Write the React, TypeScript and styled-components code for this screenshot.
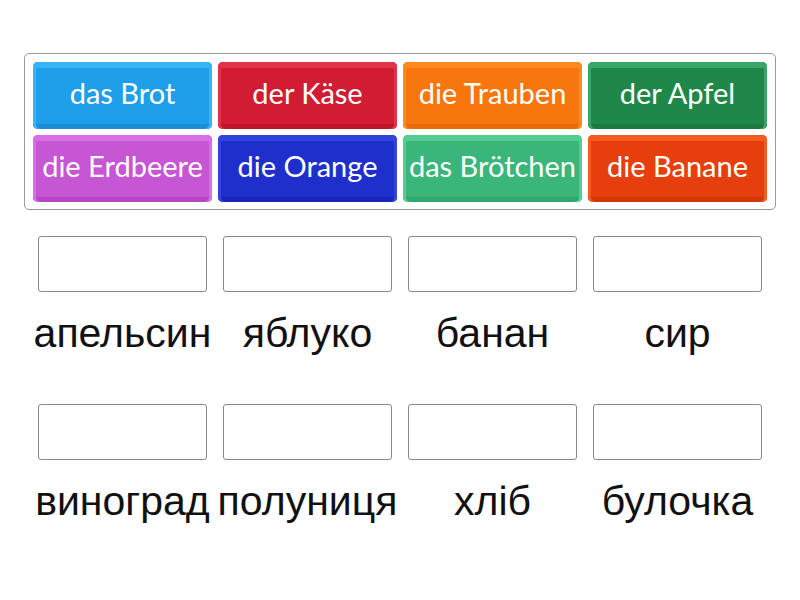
import React from "react";
import styled, { createGlobalStyle } from "styled-components";

const Global = createGlobalStyle`
  html, body { margin: 0; padding: 0; background: #fff; }
  body { width: 800px; height: 600px; overflow: hidden; }
`;

const Page = styled.div`
  width: 800px;
  height: 600px;
  box-sizing: border-box;
  padding: 53px 24px 0 24px;
`;

const Bank = styled.div`
  box-sizing: border-box;
  width: 752px;
  height: 157px;
  border: 1px solid #9a9a9a;
  border-radius: 5px;
  padding: 8px 8px 0 8px;
  display: grid;
  grid-template-columns: repeat(4, 179px);
  grid-auto-rows: 67px;
  column-gap: 6px;
  row-gap: 6px;
`;

const Tile = styled.div<{ $face: string; $light: string; $dark: string }>`
  box-sizing: border-box;
  border-radius: 5px;
  background: ${(p) => p.$face};
  box-shadow: inset 3px 0 0 ${(p) => p.$light}, inset -3px 0 0 ${(p) => p.$light},
    inset 0 6px 0 ${(p) => p.$light}, inset 0 -5px 0 ${(p) => p.$dark};
  display: flex;
  align-items: center;
  justify-content: center;
  padding-bottom: 7px;
  color: #fff;
  font-family: Lato, "Open Sans", sans-serif;
  font-size: 29px;
  white-space: nowrap;
`;

const Grid = styled.div`
  display: grid;
  grid-template-columns: repeat(4, 185px);
  margin-left: 6px;
  margin-top: 26px;
`;

const Cell = styled.div`
  display: flex;
  flex-direction: column;
  align-items: center;
  height: 168px;
`;

const Box = styled.div`
  box-sizing: border-box;
  width: 169px;
  height: 56px;
  border: 1px solid #8a8a8a;
  border-radius: 3px;
  background: #fff;
`;

const Label = styled.div`
  margin-top: 18px;
  font-family: "Liberation Sans", Arial, sans-serif;
  font-size: 41px;
  line-height: 46px;
  color: #111;
  white-space: nowrap;
`;

const tiles = [
  { t: "das Brot", face: "#1f9fe9", light: "#38b3f6", dark: "#1a8fd6" },
  { t: "der Käse", face: "#d21c34", light: "#e23447", dark: "#c01329" },
  { t: "die Trauben", face: "#f7760e", light: "#fd8a1f", dark: "#ea6a08" },
  { t: "der Apfel", face: "#1f8848", light: "#3ba766", dark: "#1a7a3f" },
  { t: "die Erdbeere", face: "#c656d3", light: "#d86fe4", dark: "#b547c2" },
  { t: "die Orange", face: "#1f2fcb", light: "#3145dd", dark: "#1826b8" },
  { t: "das Brötchen", face: "#3bb67a", light: "#55cc91", dark: "#32a66e" },
  { t: "die Banane", face: "#e63f0d", light: "#f45a22", dark: "#d33608" },
];

const words = [
  "апельсин",
  "яблуко",
  "банан",
  "сир",
  "виноград",
  "полуниця",
  "хліб",
  "булочка",
];

export default function App() {
  return (
    <Page>
      <Global />
      <Bank>
        {tiles.map((x) => (
          <Tile key={x.t} $face={x.face} $light={x.light} $dark={x.dark}>
            {x.t}
          </Tile>
        ))}
      </Bank>
      <Grid>
        {words.map((w) => (
          <Cell key={w}>
            <Box />
            <Label>{w}</Label>
          </Cell>
        ))}
      </Grid>
    </Page>
  );
}
